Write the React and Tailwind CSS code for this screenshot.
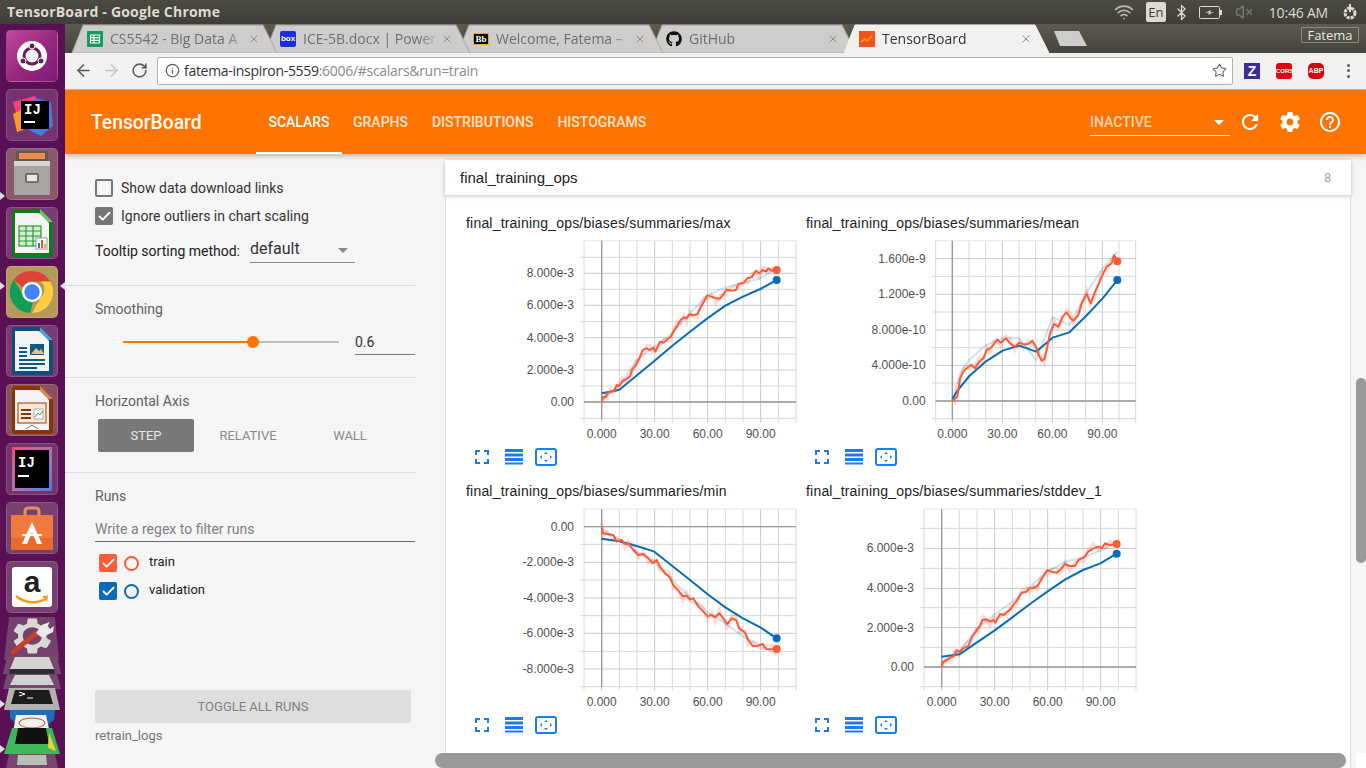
import React from "react";
import { ArrowLeft, ArrowRight, RotateCw, Info, Star, X, Bluetooth, Wifi, VolumeX, Check } from "lucide-react";
import { FaGithub } from "react-icons/fa";

const UI_FONT = "font-['Open_Sans',sans-serif]";
const ARIAL = "font-['Liberation_Sans',Arial,sans-serif]";

const pts = (list) => list.map((p) => p.join(",")).join(" ");

// rough noisy copy of the smoothed line, drawn very light behind it
const JITTER = [-14, 11, -7, 15, -12, 6, 13, -9];
const noisy = (list) => list.map((p, i) => [p[0], p[1] + JITTER[i % 8]]);

const CHARTS = [
  {
    title: "final_training_ops/biases/summaries/max",
    x0: 425, step: 53, top: 122, bottom: 658, y0: 606, vy: 120,
    ticks: [[220, "8.000e-3"], [316, "6.000e-3"], [413, "4.000e-3"], [510, "2.000e-3"], [606, "0.00"]],
    minor: [172, 268, 365, 462, 558, 655],
    orange: [[425,605],[430,590],[437,592],[443,578],[452,576],[462,572],[470,555],[478,558],[486,545],[497,538],[510,530],[516,508],[528,495],[538,475],[548,450],[560,445],[570,450],[580,443],[586,455],[600,425],[612,428],[622,418],[632,410],[642,392],[650,380],[662,360],[672,352],[680,355],[688,343],[700,346],[712,342],[722,322],[732,305],[742,286],[755,290],[768,295],[780,296],[792,280],[800,268],[812,272],[828,270],[835,252],[852,248],[862,235],[875,232],[888,212],[898,220],[908,210],[918,215],[925,205],[935,212],[950,210]],
    blue: [[425,580],[450,575],[478,569],[583,483],[637,437],[690,395],[742,355],[796,317],[849,290],[901,267],[950,240]],
    lightBlue: [[425,600],[480,555],[530,480],[583,440],[637,400],[690,340],[742,285],[796,262],[849,250],[901,235],[950,205]],
  },
  {
    title: "final_training_ops/biases/summaries/mean",
    x0: 457, step: 50, top: 122, bottom: 658, y0: 603, vy: 120,
    ticks: [[176, "1.600e-9"], [283, "1.200e-9"], [390, "8.000e-10"], [496, "4.000e-10"], [603, "0.00"]],
    minor: [229, 336, 443, 549, 656],
    orange: [[457,603],[465,595],[472,590],[480,535],[490,515],[505,500],[515,495],[525,505],[538,485],[550,475],[560,450],[570,445],[580,435],[592,418],[602,428],[618,415],[630,430],[645,440],[658,428],[670,433],[685,432],[697,422],[708,440],[716,465],[725,482],[733,478],[742,440],[750,400],[762,372],[775,380],[788,350],[800,337],[812,355],[820,362],[835,345],[845,310],[860,282],[872,310],[885,275],[895,255],[905,230],[920,200],[935,190],[942,165],[952,184]],
    blue: [[457,598],[470,575],[508,528],[558,484],[608,452],[658,437],[708,455],[758,413],[808,397],[858,348],[908,295],[952,240]],
    lightBlue: [[457,600],[480,520],[508,480],[558,435],[608,415],[658,415],[708,480],[758,352],[808,375],[858,280],[908,205],[952,155]],
  },
  {
    title: "final_training_ops/biases/summaries/min",
    x0: 425, step: 53, top: 87, bottom: 622, y0: 140, vy: 84,
    ticks: [[140, "0.00"], [247, "-2.000e-3"], [354, "-4.000e-3"], [460, "-6.000e-3"], [567, "-8.000e-3"]],
    minor: [193, 300, 407, 514, 620],
    orange: [[425,142],[430,160],[440,162],[460,165],[470,185],[485,180],[495,192],[505,190],[520,210],[535,225],[550,222],[565,235],[578,250],[590,240],[600,260],[615,280],[628,290],[640,315],[655,332],[668,348],[680,348],[690,358],[700,355],[715,380],[730,395],[742,408],[755,405],[765,412],[778,400],[790,415],[802,432],[815,415],[828,420],[838,445],[855,458],[865,480],[878,498],[895,497],[908,492],[918,507],[935,508],[950,507]],
    blue: [[425,176],[478,184],[530,198],[583,215],[637,258],[690,300],[742,342],[796,382],[849,415],[901,442],[950,475]],
    lightBlue: [[425,145],[478,180],[530,215],[583,245],[637,300],[690,350],[742,395],[796,430],[849,470],[901,495],[950,525]],
  },
  {
    title: "final_training_ops/biases/summaries/stddev_1",
    x0: 425, step: 53, top: 87, bottom: 622, y0: 561, vy: 84,
    ticks: [[205, "6.000e-3"], [325, "4.000e-3"], [443, "2.000e-3"], [561, "0.00"]],
    minor: [145, 265, 383, 502, 620],
    orange: [[425,558],[430,545],[440,540],[452,532],[462,528],[470,510],[478,515],[490,505],[505,498],[516,470],[528,455],[538,440],[548,420],[560,418],[570,425],[580,420],[586,428],[600,402],[612,405],[622,395],[632,388],[642,372],[650,362],[665,338],[680,335],[688,325],[700,324],[712,318],[722,302],[732,285],[742,270],[755,275],[770,278],[780,270],[795,252],[808,258],[825,258],[835,240],[852,232],[865,215],[880,205],[895,200],[905,205],[915,190],[930,195],[950,192]],
    blue: [[425,530],[478,523],[583,452],[637,412],[690,372],[742,335],[796,298],[849,270],[901,250],[950,221]],
    lightBlue: [[425,555],[480,515],[530,445],[583,405],[637,365],[690,320],[742,275],[796,245],[849,232],[901,212],[950,190]],
  },
];

const ORANGE = "#ff5a36";
const BLUE = "#0a6cb8";

function Chart({ chart }) {
  const { x0, step, top, bottom, y0, vy, ticks, minor, orange, blue, lightBlue } = chart;
  const left = x0 - step;
  const right = x0 + step * 11;
  const xs = Array.from({ length: 13 }, (_, i) => left + i * step);
  const lastO = orange[orange.length - 1];
  const lastB = blue[blue.length - 1];
  return (
    <div className="h-[268px]">
      <div className={`${ARIAL} text-[14px] leading-[26px] h-[24px] text-[#212121] tracking-[0.2px]`}>{chart.title}</div>
      {/* viewBox is in 3x pixels, easier to read values off the screenshot */}
      <svg width="340" height="204" viewBox={`0 ${vy} 1020 612`} className="mt-[6px] -ml-[6px] block">
        {xs.map((x, i) => (
          <line key={x} x1={x} x2={x} y1={top} y2={bottom + 10} stroke={i % 3 === 1 ? "#c8c8c8" : "#d8d8d8"} strokeWidth="3" />
        ))}
        {minor.map((y) => (
          <line key={y} x1={left - 12} x2={right} y1={y} y2={y} stroke="#d8d8d8" strokeWidth="3" />
        ))}
        {ticks.map(([y]) => (
          <line key={y} x1={left} x2={right} y1={y} y2={y} stroke="#c8c8c8" strokeWidth="3" />
        ))}
        <line x1={left} x2={right} y1={top} y2={top} stroke="#e6e6e6" strokeWidth="3" />
        <line x1={left} x2={right} y1={y0} y2={y0} stroke="#999999" strokeWidth="4" />
        <line x1={x0} x2={x0} y1={top} y2={bottom} stroke="#999999" strokeWidth="4" />

        <polyline points={pts(noisy(orange))} fill="none" stroke={ORANGE} strokeOpacity="0.22" strokeWidth="8" />
        <polyline points={pts(lightBlue)} fill="none" stroke={BLUE} strokeOpacity="0.2" strokeWidth="6" />
        <polyline points={pts(blue)} fill="none" stroke={BLUE} strokeWidth="6" strokeLinejoin="round" />
        <polyline points={pts(orange)} fill="none" stroke={ORANGE} strokeWidth="6" strokeLinejoin="round" />
        <circle cx={lastO[0]} cy={lastO[1]} r="12" fill={ORANGE} />
        <circle cx={lastB[0]} cy={lastB[1]} r="12" fill={BLUE} />

        {ticks.map(([y, label]) => (
          <text key={label} x={left - 30} y={y + 12} textAnchor="end" fontSize="36" fill="#505050" fontFamily="Liberation Sans">{label}</text>
        ))}
        {["0.000", "30.00", "60.00", "90.00"].map((label, i) => (
          <text key={label} x={x0 + i * step * 3} y={bottom + 56} textAnchor="middle" fontSize="36" fill="#505050" fontFamily="Liberation Sans">{label}</text>
        ))}
      </svg>
      <div className="flex items-center h-[18px] mt-[4px] ml-[9px]">
        <svg width="14" height="14" viewBox="0 0 14 14" fill="none" stroke="#1a7cf5" strokeWidth="2">
          <path d="M1 5V1h4M9 1h4v4M13 9v4H9M5 13H1V9" />
        </svg>
        <svg width="18" height="16" viewBox="0 0 18 16" className="ml-[16px]" fill="#1a7cf5">
          <rect y="0" width="18" height="3" /><rect y="4.5" width="18" height="3" /><rect y="9" width="18" height="3" /><rect y="13.5" width="18" height="2" />
        </svg>
        <svg width="22" height="18" viewBox="0 0 22 18" className="ml-[12px]" fill="#1a7cf5">
          <rect x="1" y="1" width="20" height="16" rx="2" fill="none" stroke="#1a7cf5" strokeWidth="2" />
          <path d="M11 4l2 2H9zM11 14l2-2H9zM5 9l2-2v4zM17 9l-2-2v4z" />
        </svg>
      </div>
    </div>
  );
}

function Tile({ children, className = "bg-[#7a3a74]", style }) {
  return (
    <div className={`w-[52px] h-[52px] ml-[6px] shrink-0 rounded-[5px] border border-white/15 overflow-hidden flex items-center justify-center ${className}`} style={style}>
      {children}
    </div>
  );
}

function DocIcon({ edge, corner, children }) {
  return (
    <svg width="44" height="50" viewBox="0 0 44 50">
      <path d="M2 4a3 3 0 0 1 3-3h25l13 13v32a3 3 0 0 1-3 3H5a3 3 0 0 1-3-3z" fill={edge} />
      <path d="M30 1l13 13H30z" fill={corner} />
      <path d="M5 5h24l10 10v30H5z" fill="#f4f4f4" />
      {children}
    </svg>
  );
}

function Launcher() {
  return (
    <div className="w-[65px] shrink-0 bg-[#5a1055] flex flex-col gap-[7px] pt-[6px] relative overflow-hidden">
      <Tile className="bg-gradient-to-br from-[#c04aa0] via-[#99287f] to-[#7c1c78]">
        <svg width="40" height="40" viewBox="0 0 40 40">
          <circle cx="20" cy="20" r="15" fill="#fff" />
          <circle cx="20" cy="20" r="8" fill="none" stroke="#6a1a5f" strokeWidth="3" />
          <circle cx="20" cy="10" r="3" fill="#6a1a5f" stroke="#fff" />
          <circle cx="11" cy="25" r="3" fill="#6a1a5f" stroke="#fff" />
          <circle cx="29" cy="25" r="3" fill="#6a1a5f" stroke="#fff" />
        </svg>
      </Tile>
      <Tile className="bg-[#76346f]">
        <div className="relative w-[46px] h-[46px]">
          <svg width="46" height="46" viewBox="0 0 46 46" className="absolute inset-0">
            <path d="M4 10l22-6 6 14-24 6z" fill="#fb3f7c" />
            <path d="M26 6l16 4 2 24-12 10-12-6z" fill="#3e7fe0" />
            <path d="M4 22l8-4 2 20-6 2z" fill="#f79a2b" />
          </svg>
          <div className="absolute left-[12px] top-[9px] w-[28px] h-[28px] bg-black text-white text-[14px] font-bold leading-[14px] pl-[3px] pt-[2px] font-['Liberation_Mono',monospace]">
            IJ
            <div className="w-[11px] h-[2px] bg-white mt-[4px]" />
          </div>
        </div>
      </Tile>
      <Tile className="bg-[#8a5a6a]">
        <svg width="42" height="46" viewBox="0 0 42 46">
          <rect x="5" y="0" width="32" height="12" fill="#5e5a56" />
          <rect x="8" y="2" width="26" height="6" fill="#f08a4b" />
          <rect x="3" y="10" width="36" height="34" rx="1" fill="#a8a5a2" />
          <rect x="3" y="10" width="36" height="5" fill="#d8d6d3" />
          <rect x="15" y="23" width="12" height="8" rx="1" fill="#e8e8e8" stroke="#555" strokeWidth="1.5" />
        </svg>
      </Tile>
      <Tile>
        <DocIcon edge="#0f7a1a" corner="#6cc36c">
          <g stroke="#2a9a2a" strokeWidth="1.2" fill="#d7edd7">
            <rect x="9" y="18" width="22" height="20" />
            <path d="M9 23h22M9 28h22M9 33h22M16 18v20M23 18v20" fill="none" />
          </g>
          <rect x="26" y="30" width="11" height="11" fill="#fff" stroke="#888" strokeWidth="0.8" />
          <rect x="28" y="35" width="2" height="5" fill="#2a7ac8" /><rect x="31" y="32" width="2" height="8" fill="#e8542a" /><rect x="34" y="36" width="2" height="4" fill="#f2b632" />
        </DocIcon>
      </Tile>
      <Tile className="bg-[#b5985a]">
        <svg width="46" height="46" viewBox="0 0 48 48">
          <path d="M24 2a22 22 0 0 1 19 11H24a11 11 0 0 0-10 6L5 11A22 22 0 0 1 24 2z" fill="#db4437" />
          <path d="M43 13a22 22 0 0 1-19 33l9-16a11 11 0 0 0 0-17z" fill="#ffcd40" />
          <path d="M5 11l10 17a11 11 0 0 0 10 7l-3 11A22 22 0 0 1 5 11z" fill="#0f9d58" />
          <circle cx="24" cy="24" r="10.5" fill="#fff" />
          <circle cx="24" cy="24" r="8" fill="#4285f4" />
        </svg>
      </Tile>
      <Tile>
        <DocIcon edge="#0c4f7c" corner="#4f9fd1">
          <g fill="#0c5a8a">
            <rect x="9" y="21" width="8" height="2" /><rect x="9" y="25" width="8" height="2" /><rect x="9" y="29" width="8" height="2" />
            <rect x="9" y="33" width="26" height="2" /><rect x="9" y="37" width="26" height="2" /><rect x="9" y="41" width="18" height="2" />
            <rect x="20" y="18" width="14" height="11" />
          </g>
          <path d="M21 28l5-6 3 3 2-2 3 5z" fill="#e8c27a" />
        </DocIcon>
      </Tile>
      <Tile className="bg-[#8a5060]">
        <DocIcon edge="#8a3208" corner="#d28a50">
          <rect x="8" y="18" width="28" height="20" fill="#fbe8d8" stroke="#b8501c" strokeWidth="1.2" />
          <g fill="#7a3a12"><rect x="11" y="24" width="10" height="2" /><rect x="11" y="28" width="10" height="2" /><rect x="11" y="32" width="10" height="2" /></g>
          <rect x="24" y="24" width="9" height="10" fill="#fff" stroke="#777" strokeWidth="0.6" />
          <path d="M25 32l3-4 2 2 3-4" stroke="#3a9a3a" fill="none" />
          <path d="M16 44l6-4 6 4" stroke="#777" fill="none" />
        </DocIcon>
      </Tile>
      <Tile className="bg-[#76346f]">
        <div className="relative w-[40px] h-[44px] bg-gradient-to-br from-[#fb3f7c] to-[#3e7fe0] p-[3px]">
          <div className="w-full h-full bg-black text-white text-[14px] font-bold leading-[14px] pl-[3px] pt-[6px] font-['Liberation_Mono',monospace]">
            IJ
            <div className="w-[11px] h-[2px] bg-white mt-[5px]" />
          </div>
        </div>
      </Tile>
      <Tile className="bg-[#77406f]">
        <svg width="44" height="46" viewBox="0 0 44 46">
          <path d="M15 12V6a3 3 0 0 1 3-3h8a3 3 0 0 1 3 3v6" fill="none" stroke="#e8905f" strokeWidth="3" />
          <rect x="1" y="10" width="42" height="35" fill="#ef7a3c" />
          <rect x="1" y="33" width="42" height="12" fill="#e66a2c" />
          <path d="M22 17l10 22h-5l-5-12-5 12h-5z" fill="#fff" />
          <rect x="12" y="29" width="20" height="2" fill="#fff" />
        </svg>
      </Tile>
      <Tile className="bg-[#77406f]">
        <div className="w-[40px] h-[40px] bg-white rounded-[3px] flex flex-col items-center relative">
          <span className={`${ARIAL} text-[30px] font-bold leading-[30px] text-[#222]`}>a</span>
          <svg width="36" height="12" viewBox="0 0 36 12" className="absolute bottom-[1px]">
            <path d="M2 2c10 8 22 8 31 2" fill="none" stroke="#f79a1e" strokeWidth="2.5" />
            <path d="M28 2l6-0.5-1 6z" fill="#f79a1e" />
          </svg>
        </div>
      </Tile>

      {/* folded launcher items at the bottom */}
      <svg width="65" height="156" viewBox="0 0 65 156" className="shrink-0 -mt-[3px]">
        <path d="M9 0h46l4 43H4z" fill="#76406f" />
        <g transform="translate(9.5 -2) scale(1.9 1.75)">
          <path fill="#d9d9d6" d="M19.43 12.98c.04-.32.07-.64.07-.98s-.03-.66-.07-.98l2.11-1.65c.19-.15.24-.42.12-.64l-2-3.46c-.12-.22-.39-.3-.61-.22l-2.49 1c-.52-.4-1.08-.73-1.69-.98l-.38-2.65C14.46 2.18 14.25 2 14 2h-4c-.25 0-.46.18-.49.42l-.38 2.65c-.61.25-1.17.59-1.69.98l-2.49-1c-.23-.09-.49 0-.61.22l-2 3.46c-.13.22-.07.49.12.64l2.11 1.65c-.04.32-.07.65-.07.98s.03.66.07.98l-2.11 1.65c-.19.15-.24.42-.12.64l2 3.46c.12.22.39.3.61.22l2.49-1c.52.4 1.08.73 1.69.98l.38 2.65c.03.24.24.42.49.42h4c.25 0 .46-.18.49-.42l.38-2.65c.61-.25 1.17-.59 1.69-.98l2.49 1c.23.09.49 0 .61-.22l2-3.46c.12-.22.07-.49-.12-.64l-2.11-1.65zM12 17c-2.76 0-5-2.24-5-5s2.24-5 5-5 5 2.24 5 5-2.24 5-5 5z" />
        </g>
        <path d="M13 35L38 15" stroke="#c8402a" strokeWidth="5" strokeLinecap="round" />
        <path d="M36 16l6-8 8-3-3 5 3 2 4-3-1 6-8 4-4 1z" fill="#ecebe8" />
        <path d="M7 39h50l4 18H3z" fill="#76486f" />
        <path d="M15 40h34l5 12H10z" fill="#d2d2d0" /><path d="M10 52h44l1 5H9z" fill="#2c2c2c" />
        <path d="M7 57h50l4 15H3z" fill="#76486f" />
        <path d="M15 58h34l5 10H10z" fill="#d2d2d0" />
        <path d="M9 71h46l5 22H4z" fill="#b4b0ae" />
        <path d="M15 73h34l4 14H11z" fill="#1d1d1d" />
        <path d="M19 75l6 2-6 2M27 81h6" fill="none" stroke="#fff" />
        <path d="M10 93h45l-1 10-8 6H18l-8-8z" fill="#1c6dbb" />
        <path d="M16 98h30l4 18H13z" fill="#f2f2f2" />
        <ellipse cx="32" cy="106" rx="13" ry="5" fill="none" stroke="#d0413a" />
        <path d="M12 111h40l8 26H4z" fill="#3fb65a" />
        <path d="M18 111h28l3 16H15z" fill="#111" />
        <path d="M49 116l7 18-8-3z" fill="#e8d53a" />
        <path d="M9 137h46l4 19H5z" fill="#76486f" />
        <path d="M18 138h28l1 10H17z" fill="#bdbdb6" />
      </svg>

      {/* running app pips */}
      <span className="absolute left-0 top-[168px] w-0 h-0 border-y-[4px] border-y-transparent border-l-[5px] border-l-[#ddd]" />
      <span className="absolute left-0 top-[258px] w-0 h-0 border-y-[4px] border-y-transparent border-l-[5px] border-l-[#ddd]" />
      <span className="absolute right-[0px] top-[258px] w-0 h-0 border-y-[4px] border-y-transparent border-r-[5px] border-r-[#ddd]" />
      <span className="absolute left-0 top-[676px] w-0 h-0 border-y-[4px] border-y-transparent border-l-[5px] border-l-[#ddd]" />
      <span className="absolute left-0 top-[721px] w-0 h-0 border-y-[4px] border-y-transparent border-l-[5px] border-l-[#ddd]" />
    </div>
  );
}

function ChromeTab({ label, icon, active, z }) {
  return (
    <div className={`relative w-[193px] h-[29px] shrink-0 ${z}`}>
      <svg width="207" height="29" viewBox="0 0 207 29" className="absolute left-0 top-0">
        <path d="M0 29L11 1h180l14 28z" fill={active ? "#f2f1f0" : "#cfcdcb"} stroke={active ? "#f2f1f0" : "#a8a6a3"} />
      </svg>
      <div className="relative flex items-center h-full pl-[15px]">
        <div className="w-[16px] h-[16px] shrink-0 flex items-center justify-center">{icon}</div>
        <div className={`ml-[7px] w-[137px] whitespace-nowrap overflow-hidden text-[14px] ${UI_FONT} ${active ? "text-[#333]" : "text-[#6e6e6e]"} [mask-image:linear-gradient(90deg,#000_85%,transparent)]`}>
          {label}
        </div>
        <X size={12} strokeWidth={2} className="ml-[1px] text-[#8a8a8a] shrink-0" />
      </div>
    </div>
  );
}

const TABS = [
  {
    label: "CS5542 - Big Data A", z: "z-[5]",
    icon: (
      <svg width="16" height="16" viewBox="0 0 16 16">
        <rect width="16" height="16" rx="1" fill="#0f9d58" />
        <path d="M3.5 4h9v8h-9zM3.5 6.7h9M3.5 9.3h9M7 4v8" fill="none" stroke="#fff" strokeWidth="1.2" />
      </svg>
    ),
  },
  {
    label: "ICE-5B.docx | Power", z: "z-[4]",
    icon: (
      <div className={`w-[16px] h-[16px] bg-[#1d2fd8] rounded-[2px] text-white text-[8px] font-bold leading-[16px] text-center ${ARIAL}`}>box</div>
    ),
  },
  {
    label: "Welcome, Fatema –", z: "z-[3]",
    icon: (
      <div className="w-[16px] h-[12px] bg-black border border-[#e8a820] text-white text-[9px] font-bold leading-[10px] text-center font-['Liberation_Serif',serif]">Bb</div>
    ),
  },
  { label: "GitHub", z: "z-[2]", icon: <FaGithub size={16} color="#111" /> },
  {
    label: "TensorBoard", z: "z-[10]", active: true,
    icon: (
      <svg width="16" height="16" viewBox="0 0 16 16">
        <rect width="16" height="16" fill="#f4511e" />
        <path d="M2 11l4-3 2 2 5-5" fill="none" stroke="#ffb300" strokeWidth="1.5" />
      </svg>
    ),
  },
];

function TitleBar() {
  return (
    <div className={`h-[24px] shrink-0 bg-gradient-to-b from-[#4b4a43] to-[#3f3e39] flex items-center pl-[7px] ${UI_FONT}`}>
      <span className="text-[14px] font-bold tracking-[0.2px] text-[#dfdbd2] leading-[24px]">TensorBoard - Google Chrome</span>
      <div className="ml-auto flex items-center h-full text-[#dfdbd2]">
        <Wifi size={20} strokeWidth={2} className="text-[#bbb8b0]" />
        <div className="ml-[12px] w-[20px] h-[20px] rounded-[2px] bg-[#dcd9d3] text-[#3c3b37] text-[13px] leading-[20px] text-center">En</div>
        <Bluetooth size={17} strokeWidth={1.8} className="ml-[7px]" />
        <svg width="24" height="13" viewBox="0 0 24 13" className="ml-[9px]">
          <rect x="0.5" y="0.5" width="20" height="12" rx="1" fill="none" stroke="#dfdbd2" />
          <rect x="21" y="4" width="2" height="5" fill="#dfdbd2" />
          <path d="M6 7l6-3-1 2.5 4-0.5-6 3 1-2.5z" fill="#dfdbd2" />
        </svg>
        <VolumeX size={18} strokeWidth={2} className="ml-[12px] text-[#77766e]" />
        <span className="ml-[16px] text-[14px] tracking-[-0.2px]">10:46 AM</span>
        <svg width="18" height="18" viewBox="0 0 18 18" className="ml-[13px] mr-[7px]" fill="none" stroke="#dfdbd2">
          <circle cx="9" cy="10" r="5" strokeWidth="3" strokeDasharray="3 1" />
          <path d="M9 1v8" strokeWidth="2" />
        </svg>
      </div>
    </div>
  );
}

function TabStrip() {
  return (
    <div className="h-[29px] shrink-0 bg-gradient-to-b from-[#5c5a50] to-[#45443d] flex pl-[7px] relative">
      {TABS.map((t) => (
        <ChromeTab key={t.label} {...t} />
      ))}
      <svg width="34" height="15" viewBox="0 0 34 15" className="ml-[17px] mt-[7px]">
        <path d="M0 0h25l8 15H6z" fill="#cfcdcb" />
      </svg>
      <div className={`absolute right-[7px] top-[3px] w-[58px] h-[16px] border border-[#8d8c84] rounded-[1px] text-[#e8e6e0] text-[13px] leading-[14px] text-center ${UI_FONT}`}>
        Fatema
      </div>
    </div>
  );
}

function Toolbar() {
  return (
    <div className="h-[37px] shrink-0 bg-[#f2f1f0] border-b border-[#c0c0c0] flex items-center pl-[4px] pb-[1px]">
      <div className="w-[28px] flex justify-center"><ArrowLeft size={19} strokeWidth={2} className="text-[#5a5a5a]" /></div>
      <div className="w-[28px] flex justify-center"><ArrowRight size={19} strokeWidth={2} className="text-[#c4c4c4]" /></div>
      <div className="w-[28px] flex justify-center"><RotateCw size={17} strokeWidth={2.2} className="text-[#5a5a5a]" /></div>
      <div className={`ml-[4px] w-[1076px] h-[28px] bg-white border border-[#b0b0b0] rounded-[2px] flex items-center pl-[7px] pr-[5px] text-[14px] ${UI_FONT}`}>
        <Info size={15} strokeWidth={2} className="text-[#5a5a5a]" />
        <span className="ml-[4px] text-[#333] tracking-[-0.3px]">fatema-inspiron-5559<span className="text-[#8a8a8a]">:6006/#scalars&amp;run=train</span></span>
        <Star size={15} strokeWidth={1.8} className="ml-auto text-[#6a6a6a]" />
      </div>
      <div className="ml-[11px] w-[16px] h-[16px] bg-[#3b2c9c] text-white text-[14px] font-bold leading-[16px] text-center font-['Liberation_Sans',sans-serif]">Z</div>
      <div className="ml-[16px] w-[16px] h-[16px] bg-[#e3000f] rounded-[3px] text-white text-[6px] font-bold leading-[16px] text-center font-['Liberation_Sans',sans-serif]">CORS</div>
      <div className="ml-[16px] w-[16px] h-[16px] bg-[#d8000c] rounded-[5px] text-white text-[7px] font-bold leading-[16px] text-center font-['Liberation_Sans',sans-serif]">ABP</div>
      <div className="ml-[23px] flex flex-col gap-[2.5px]">
        <span className="w-[3px] h-[3px] rounded-full bg-[#5a5a5a]" />
        <span className="w-[3px] h-[3px] rounded-full bg-[#5a5a5a]" />
        <span className="w-[3px] h-[3px] rounded-full bg-[#5a5a5a]" />
      </div>
    </div>
  );
}

function TbHeader() {
  return (
    <div className="h-[64px] shrink-0 bg-[#ff7300] flex text-white font-['Roboto',sans-serif] relative z-10 shadow-[0_2px_5px_rgba(0,0,0,0.26)]">
      <div className="ml-[26px] w-[165px] text-[19.3px] font-medium leading-[65px]">TensorBoard</div>
      <div className="flex text-[14px] font-medium">
        <div className="w-[86px] text-center leading-[64px] border-b-[2px] border-white h-[64px] -mr-[1px]">SCALARS</div>
        {["GRAPHS", "DISTRIBUTIONS", "HISTOGRAMS"].map((t) => (
          <div key={t} className="px-[12px] leading-[64px] text-white/80">{t}</div>
        ))}
      </div>
      <div className="ml-auto flex items-center pr-[24px]">
        <div className="w-[140px] h-[27px] mt-[1px] border-b border-white/90 flex items-center text-[14px] font-medium text-white/70">
          INACTIVE
          <span className="ml-auto mr-[6px] w-0 h-0 border-x-[5px] border-x-transparent border-t-[5px] border-t-white" />
        </div>
        <svg width="24" height="24" viewBox="0 0 24 24" fill="#fff" className="ml-[8px]">
          <path d="M17.65 6.35C16.2 4.9 14.21 4 12 4c-4.42 0-7.99 3.58-7.99 8s3.57 8 7.99 8c3.73 0 6.84-2.55 7.73-6h-2.08c-.82 2.33-3.04 4-5.65 4-3.31 0-6-2.69-6-6s2.69-6 6-6c1.66 0 3.14.69 4.22 1.78L13 11h7V4l-2.35 2.35z" />
        </svg>
        <svg width="24" height="24" viewBox="0 0 24 24" fill="#fff" className="ml-[16px]">
          <path d="M19.43 12.98c.04-.32.07-.64.07-.98s-.03-.66-.07-.98l2.11-1.65c.19-.15.24-.42.12-.64l-2-3.46c-.12-.22-.39-.3-.61-.22l-2.49 1c-.52-.4-1.08-.73-1.69-.98l-.38-2.65C14.46 2.18 14.25 2 14 2h-4c-.25 0-.46.18-.49.42l-.38 2.65c-.61.25-1.17.59-1.69.98l-2.49-1c-.23-.09-.49 0-.61.22l-2 3.46c-.13.22-.07.49.12.64l2.11 1.65c-.04.32-.07.65-.07.98s.03.66.07.98l-2.11 1.65c-.19.15-.24.42-.12.64l2 3.46c.12.22.39.3.61.22l2.49-1c.52.4 1.08.73 1.69.98l.38 2.65c.03.24.24.42.49.42h4c.25 0 .46-.18.49-.42l.38-2.65c.61-.25 1.17-.59 1.69-.98l2.49 1c.23.09.49 0 .61-.22l2-3.46c.12-.22.07-.49-.12-.64l-2.11-1.65zM12 15.5c-1.93 0-3.5-1.57-3.5-3.5s1.57-3.5 3.5-3.5 3.5 1.57 3.5 3.5-1.57 3.5-3.5 3.5z" />
        </svg>
        <svg width="24" height="24" viewBox="0 0 24 24" fill="#fff" className="ml-[16px]">
          <path d="M11 18h2v-2h-2v2zm1-16C6.48 2 2 6.48 2 12s4.48 10 10 10 10-4.48 10-10S17.52 2 12 2zm0 18c-4.41 0-8-3.59-8-8s3.59-8 8-8 8 3.59 8 8-3.59 8-8 8zm0-14c-2.21 0-4 1.79-4 4h2c0-1.1.9-2 2-2s2 .9 2 2c0 2-3 1.75-3 5h2c0-2.25 3-2.5 3-5 0-2.21-1.79-4-4-4z" />
        </svg>
      </div>
    </div>
  );
}

function Box({ className, checked }) {
  return (
    <div className={`w-[18px] h-[18px] rounded-[2px] flex items-center justify-center shrink-0 ${className}`}>
      {checked && <Check size={15} strokeWidth={3} className="text-white" />}
    </div>
  );
}

function Sidebar() {
  return (
    <div className="w-[380px] shrink-0 bg-[#f5f5f5] font-['Roboto',sans-serif] text-[14px] flex flex-col">
      <div className="w-[350px] h-[132px] pl-[30px] pt-[25px] border-b border-[#dcdcdc]">
        <div className="flex items-center h-[18px]">
          <Box className="border-2 border-[#757575]" />
          <span className="ml-[8px] text-[#333]">Show data download links</span>
        </div>
        <div className="flex items-center h-[18px] mt-[10px]">
          <Box className="bg-[#757575]" checked />
          <span className="ml-[8px] text-[#333]">Ignore outliers in chart scaling</span>
        </div>
        <div className="flex mt-[11px] h-[27px]">
          <span className="w-[155px] leading-[30px] text-[#212121]">Tooltip sorting method:</span>
          <div className="w-[105px] border-b border-[#8a8a8a] flex items-center text-[16px] text-[#333] leading-[28px]">
            default
            <span className="ml-auto mr-[7px] mt-[2px] w-0 h-0 border-x-[5px] border-x-transparent border-t-[5px] border-t-[#8a8a8a]" />
          </div>
        </div>
      </div>

      <div className="w-[350px] h-[92px] pl-[30px] border-b border-[#dcdcdc]">
        <div className="mt-[14px] leading-[18px] text-[#616161]">Smoothing</div>
        <div className="flex items-center mt-[12px] h-[24px]">
          <div className="ml-[28px] w-[216px] h-[2px] bg-[#bdbdbd] relative flex items-center">
            <div className="w-[130px] h-[2px] bg-[#ff7300]" />
            <div className="w-[12px] h-[12px] rounded-full bg-[#ff7300] -ml-[6px]" />
          </div>
          <div className="ml-[16px] w-[60px] h-[25px] border-b border-[#757575] leading-[24px] text-[#333]">0.6</div>
        </div>
      </div>

      <div className="w-[350px] h-[95px] pl-[30px] border-b border-[#dcdcdc]">
        <div className="mt-[14px] leading-[18px] text-[#616161]">Horizontal Axis</div>
        <div className="flex ml-[3px] mt-[9px] text-[13px] text-[#8a8a8a] h-[33px] leading-[33px] text-center">
          <div className="w-[96px] bg-[#787878] rounded-[2px] text-[#e8e8e8] text-[13px]">STEP</div>
          <div className="w-[108px]">RELATIVE</div>
          <div className="w-[96px]">WALL</div>
        </div>
      </div>

      <div className="w-[350px] pl-[30px] flex-1 flex flex-col">
        <div className="mt-[14px] leading-[18px] text-[#616161]">Runs</div>
        <div className="mt-[9px] h-[28px] w-[320px] border-b border-[#666] text-[#808080] leading-[30px]">Write a regex to filter runs</div>
        <div className="ml-[4px] mt-[12px] flex items-center h-[18px]">
          <Box className="bg-[#ff5a36]" checked />
          <span className="ml-[7px] w-[15px] h-[15px] rounded-full border-2 border-[#ff5a36]" />
          <span className="ml-[10px] text-[13px] text-[#212121] -mt-[2px]">train</span>
        </div>
        <div className="ml-[4px] mt-[10px] flex items-center h-[18px]">
          <Box className="bg-[#0a6cb8]" checked />
          <span className="ml-[7px] w-[15px] h-[15px] rounded-full border-2 border-[#0a6cb8]" />
          <span className="ml-[10px] text-[13px] text-[#212121] -mt-[2px]">validation</span>
        </div>
        <div className="mt-[90px] w-[316px] h-[33px] rounded-[2px] bg-[#dedede] text-[#7f7f7f] text-[13px] leading-[33px] text-center">TOGGLE ALL RUNS</div>
        <div className="mt-[3px] text-[13px] text-[#757575] leading-[20px]">retrain_logs</div>
      </div>
    </div>
  );
}

function Main() {
  return (
    <div className="flex-1 flex relative overflow-hidden bg-[#f5f5f5]">
      <Sidebar />
      <div className="w-[906px] shrink-0 pt-[6px] flex flex-col">
        <div className={`h-[35px] bg-white shadow-[0_1px_4px_rgba(0,0,0,0.25)] flex items-center pl-[15px] pr-[20px] relative ${ARIAL}`}>
          <span className="text-[15px] leading-[37px] text-[#212121]">final_training_ops</span>
          <span className="ml-auto text-[12px] text-[#999]">8</span>
        </div>
        <div className="flex-1 bg-white border-x border-[#dedede] pt-[15px] pl-[20px] grid grid-cols-[340px_340px] content-start">
          {CHARTS.map((c) => (
            <Chart key={c.title} chart={c} />
          ))}
        </div>
      </div>
      {/* scrollbars */}
      <div className="absolute right-0 top-[224px] w-[10px] h-[185px] rounded-[5px] bg-[#999]" />
      <div className="absolute left-[370px] bottom-0 w-[911px] h-[15px] rounded-full bg-[#999]" />
      <div className="absolute right-0 bottom-0 w-[10px] h-[15px] bg-white" />
    </div>
  );
}

export default function App() {
  return (
    <div className="w-[1366px] h-[768px] overflow-hidden flex flex-col bg-white">
      <TitleBar />
      <div className="flex-1 flex min-h-0">
        <Launcher />
        <div className="flex-1 flex flex-col min-w-0">
          <TabStrip />
          <Toolbar />
          <TbHeader />
          <Main />
        </div>
      </div>
    </div>
  );
}
